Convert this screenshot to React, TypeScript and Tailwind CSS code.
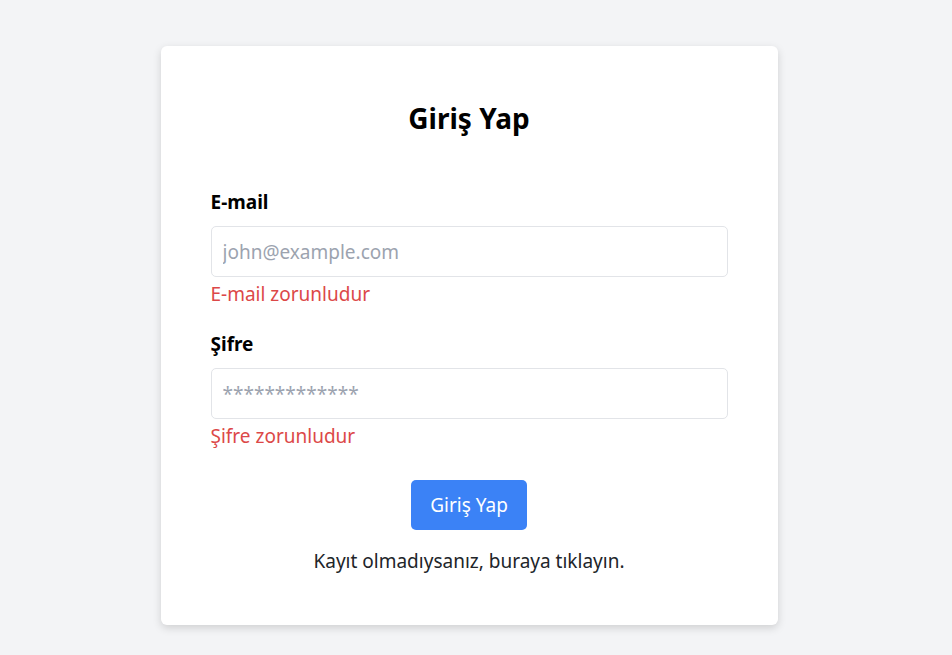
import React from 'react'

const font = { fontFamily: '"Noto Sans", "Open Sans", sans-serif' }

const Field: React.FC<{ label: string; placeholder: string; type: string; error: string }> = ({
  label,
  placeholder,
  type,
  error,
}) => (
  <div className="flex flex-col">
    <label className="text-[19px] leading-[27px] font-bold text-black">{label}</label>
    <input
      type={type === 'password' ? 'text' : type}
      placeholder={placeholder}
      className="mt-[10px] h-[51px] w-full rounded-[5px] border border-[#e2e4e8] px-[11px] text-[19px] text-gray-900 placeholder:text-[#9ca3af] outline-none"
    />
    <span className="mt-[4px] text-[19px] leading-[27px] text-[#dc4848]">{error}</span>
  </div>
)

export default function App() {
  return (
    <div className="min-h-screen bg-[#f3f4f6] flex justify-center pr-[14px] pt-[46px]" style={font}>
      <div className="w-[617px] h-[579px] bg-white rounded-[6px] shadow-[0_3px_8px_rgba(0,0,0,0.15)] px-[50px] pt-[50px] flex flex-col">
        <h1 className="text-[28px] leading-[44px] font-bold text-black text-center">Giriş Yap</h1>
        <div className="mt-[49px] flex flex-col gap-[23px]">
          <Field label="E-mail" placeholder="john@example.com" type="email" error="E-mail zorunludur" />
          <Field label="Şifre" placeholder="*************" type="password" error="Şifre zorunludur" />
        </div>
        <div className="mt-[30px] flex justify-center">
          <button className="w-[116px] h-[50px] rounded-[5px] bg-[#3b82f6] text-white text-[19px]">Giriş Yap</button>
        </div>
        <p className="mt-[18px] text-center text-[19px] leading-[27px] text-[#212529]">
          Kayıt olmadıysanız, buraya tıklayın.
        </p>
      </div>
    </div>
  )
}
